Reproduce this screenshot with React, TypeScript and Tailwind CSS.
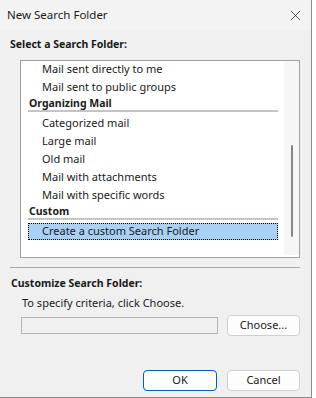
import { X } from "lucide-react";

type Row = { label: string; kind: "item" | "header"; selected?: boolean };

const rows: Row[] = [
  { label: "Mail sent directly to me", kind: "item" },
  { label: "Mail sent to public groups", kind: "item" },
  { label: "Organizing Mail", kind: "header" },
  { label: "Categorized mail", kind: "item" },
  { label: "Large mail", kind: "item" },
  { label: "Old mail", kind: "item" },
  { label: "Mail with attachments", kind: "item" },
  { label: "Mail with specific words", kind: "item" },
  { label: "Custom", kind: "header" },
  { label: "Create a custom Search Folder", kind: "item", selected: true },
];

function ListRow({ row }: { row: Row }) {
  if (row.kind === "header") {
    return (
      <div className="pr-[6px]">
        <div className="flex h-[14px] items-center pl-[1px] text-[10.5px] font-bold leading-none">{row.label}</div>
        <div className="mb-[2px] h-[2px] bg-[#c4c4c4]" />
      </div>
    );
  }
  return (
    <div className="flex h-[18px] items-center pr-[6px]">
      <div
        className={
          row.selected
            ? "flex h-[17px] w-full items-center border border-dotted border-black bg-[#a9d1f3] pl-[13px]"
            : "flex h-[17px] w-full items-center pl-[14px]"
        }
      >
        {row.label}
      </div>
    </div>
  );
}

function Button({ label, primary }: { label: string; primary?: boolean }) {
  return (
    <button
      className={
        primary
          ? "flex h-[21px] w-[74px] items-center justify-center rounded-[4px] border border-[#005fb8] bg-[#fdfdfd] text-[#1a1a1a]"
          : "flex h-[21px] w-[73px] items-center justify-center rounded-[4px] border border-[#d0d0d0] bg-[#fdfdfd] text-[#1a1a1a]"
      }
    >
      {label}
    </button>
  );
}

export default function App() {
  return (
    <div className="flex h-[398px] w-[316px] bg-white font-['Noto_Sans',sans-serif] text-[11px] text-[#1a1a1a]">
      <div className="flex h-[398px] w-[312px] flex-col border-r border-b border-[#8c8c8c] bg-[#f0f0f0]">
        <div className="flex h-[30px] shrink-0 items-center justify-between bg-[#f3f3f3] pl-[7px] pr-[7px]">
          <span className="text-[11.5px]">New Search Folder</span>
          <X className="h-[17px] w-[17px] text-[#222]" strokeWidth={1.1} />
        </div>

        <div className="mt-[9px] flex h-[11px] items-center pl-[10px] text-[10.5px] font-bold leading-none">
          Select a Search Folder:
        </div>

        <div className="ml-[20px] mt-[10px] flex h-[198px] w-[280px] shrink-0 overflow-hidden border border-[#a0a0a0] bg-white">
          <div className="-mt-[1px] flex flex-1 flex-col pl-[7px]">
            {rows.map((row) => (
              <ListRow key={row.label} row={row} />
            ))}
          </div>
          <div className="mb-[2px] flex w-[15px] justify-center bg-[#f6f6f6] pt-[84px]">
            <div className="h-[92px] w-[2px] rounded-full bg-[#858585]" />
          </div>
        </div>

        <div className="ml-[10px] mt-[9px] h-[1px] w-[290px] shrink-0 bg-[#a8a8a8]" />

        <div className="mt-[10px] flex h-[11px] items-center pl-[11px] text-[10.5px] font-bold leading-none">
          Customize Search Folder:
        </div>
        <div className="mt-[8px] flex h-[11px] items-center pl-[22px] leading-none">To specify criteria, click Choose.</div>

        <div className="mt-[7px] flex items-center">
          <div className="ml-[21px] h-[17px] w-[197px] border border-[#b4b4b4] bg-[#f0f0f0]" />
          <div className="ml-[9px]">
            <Button label="Choose..." />
          </div>
        </div>

        <div className="mt-[34px] flex">
          <div className="ml-[143px]">
            <Button label="OK" primary />
          </div>
          <div className="ml-[10px]">
            <Button label="Cancel" />
          </div>
        </div>
      </div>
    </div>
  );
}
